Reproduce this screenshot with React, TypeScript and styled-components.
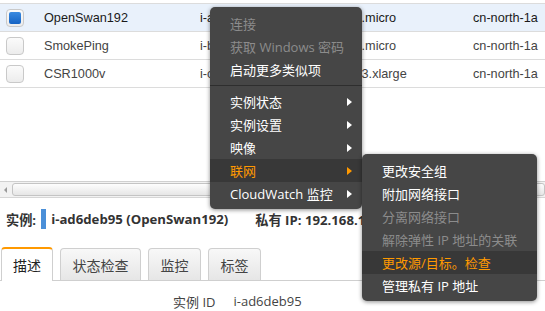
import React from "react";
import styled, { createGlobalStyle, css } from "styled-components";

const Global = createGlobalStyle`
  html, body { margin: 0; padding: 0; background: #fff; }
  body { font-family: "Liberation Sans", Arial, "Noto Sans CJK SC", sans-serif; }
`;

const UI_FONT = `"Open Sans", "Noto Sans CJK SC", sans-serif`;

const Page = styled.div`
  position: relative;
  width: 545px;
  height: 311px;
  overflow: hidden;
  background: #fff;
`;

const TableViewport = styled.div`
  margin-top: 3px;
  height: 177px;
  border-top: 1px solid #dcdcdc;
`;

const Row = styled.div<{ $selected?: boolean }>`
  display: grid;
  grid-template-columns: 44px 156px 151px 122px 1fr;
  align-items: center;
  height: 27px;
  border-bottom: 1px solid #dcdcdc;
  background: ${(p) => (p.$selected ? "#e9f1fb" : "#fff")};
  color: ${(p) => (p.$selected ? "#1a1a1a" : "#444")};
  font-size: 12.7px;
  white-space: nowrap;
`;

const CheckCell = styled.div`
  padding-left: 6px;
  display: flex;
  align-items: center;
`;

const Checkbox = styled.div<{ $checked?: boolean }>`
  width: 16px;
  height: 16px;
  border: 1px solid #c9c9c9;
  border-radius: 4px;
  background: linear-gradient(#fbfbfb, #ececec);
  display: flex;
  align-items: center;
  justify-content: center;
  ${(p) =>
    p.$checked &&
    css`
      &::after {
        content: "";
        width: 12px;
        height: 12px;
        border-radius: 2px;
        background: linear-gradient(#3b8be0, #1563c4);
      }
    `}
`;

const Cell = styled.div`
  overflow: hidden;
`;

const HScroll = styled.div`
  display: flex;
  height: 15px;
  border-top: 1px solid #d0d0d0;
  border-bottom: 1px solid #d6d6d6;
  background: #f2f2f2;
`;

const ScrollArrow = styled.div`
  width: 11px;
  display: flex;
  align-items: center;
  justify-content: center;
  &::before {
    content: "";
    border-top: 3px solid transparent;
    border-bottom: 3px solid transparent;
    border-right: 3px solid #9a9a9a;
  }
`;

const ScrollThumb = styled.div`
  flex: 1;
  margin: 1px 0 1px 1px;
  border: 1px solid #c4c4c4;
  border-radius: 3px;
  background: linear-gradient(#fdfdfd, #e6e6e6);
`;

const DetailHeader = styled.div`
  display: flex;
  align-items: center;
  height: 20px;
  margin-top: 11px;
  padding-left: 6px;
  font-family: ${UI_FONT};
  font-weight: 700;
  font-size: 13.2px;
  color: #333;
  white-space: nowrap;
`;

const ColorBar = styled.span`
  display: inline-block;
  width: 5px;
  height: 20px;
  background: #4a8fd8;
  margin: 0 5px 0 5px;
`;

const PrivateIp = styled.span`
  margin-left: 27px;
`;

const TabBar = styled.div`
  display: flex;
  gap: 7px;
  align-items: flex-end;
  margin-top: 18px;
  padding-left: 1px;
  height: 33px;
  border-bottom: 1px solid #cfcfcf;
`;

const Tab = styled.div<{ $active?: boolean; $w: number }>`
  box-sizing: border-box;
  width: ${(p) => p.$w}px;
  height: ${(p) => (p.$active ? 34 : 32)}px;
  margin-bottom: ${(p) => (p.$active ? -1 : 0)}px;
  display: flex;
  align-items: center;
  justify-content: center;
  border: 1px solid #cfcfcf;
  border-bottom: none;
  border-radius: 4px 4px 0 0;
  font-family: ${UI_FONT};
  font-size: 14px;
  color: #444;
  ${(p) =>
    p.$active
      ? css`
          background: #fff;
          border-top: 2px solid #f90;
          color: #222;
        `
      : css`
          background: linear-gradient(#f8f8f8, #e6e6e6);
        `}
`;

const DetailRow = styled.div`
  display: flex;
  padding: 11px 0 0 173px;
  font-family: ${UI_FONT};
  font-size: 13px;
  color: #444;
  gap: 18px;
`;

const Menu = styled.div<{ $left: number; $top: number; $w: number }>`
  position: absolute;
  left: ${(p) => p.$left}px;
  top: ${(p) => p.$top}px;
  width: ${(p) => p.$w}px;
  box-sizing: border-box;
  padding: 5px 0 4px;
  background: #464646;
  border-radius: 5px;
  box-shadow: 0 1px 4px rgba(0, 0, 0, 0.45);
  font-family: ${UI_FONT};
  font-size: 13px;
  z-index: 2;
`;

const MenuItem = styled.div<{ $state?: "normal" | "disabled" | "active" }>`
  display: flex;
  align-items: center;
  justify-content: space-between;
  height: 23px;
  padding: 0 10px 0 20px;
  white-space: nowrap;
  color: ${(p) =>
    p.$state === "disabled" ? "#8c8c8c" : p.$state === "active" ? "#ff9900" : "#fff"};
  background: ${(p) => (p.$state === "active" ? "#383838" : "transparent")};
`;

const Arrow = styled.span<{ $active?: boolean }>`
  width: 0;
  height: 0;
  border-top: 4px solid transparent;
  border-bottom: 4px solid transparent;
  border-left: 5px solid ${(p) => (p.$active ? "#ff9900" : "#fff")};
`;

const Separator = styled.div`
  height: 1px;
  margin: 4px 0;
  background: #2e2e2e;
`;

const rows = [
  { name: "OpenSwan192", id: "i-ad6deb95", type: "t2.micro", zone: "cn-north-1a", sel: true },
  { name: "SmokePing", id: "i-b2c7f1a0", type: "t2.micro", zone: "cn-north-1a", sel: false },
  { name: "CSR1000v", id: "i-c41e9d27", type: "m3.xlarge", zone: "cn-north-1a", sel: false },
];

export default function App() {
  return (
    <Page>
      <Global />
      <TableViewport>
        {rows.map((r) => (
          <Row key={r.name} $selected={r.sel}>
            <CheckCell>
              <Checkbox $checked={r.sel} />
            </CheckCell>
            <Cell>{r.name}</Cell>
            <Cell>{r.id}</Cell>
            <Cell>{r.type}</Cell>
            <Cell>{r.zone}</Cell>
          </Row>
        ))}
      </TableViewport>
      <HScroll>
        <ScrollArrow />
        <ScrollThumb />
      </HScroll>
      <DetailHeader>
        实例:
        <ColorBar />
        i-ad6deb95 (OpenSwan192)
        <PrivateIp>私有 IP: 192.168.1.192</PrivateIp>
      </DetailHeader>
      <TabBar>
        <Tab $active $w={52}>描述</Tab>
        <Tab $w={81}>状态检查</Tab>
        <Tab $w={53}>监控</Tab>
        <Tab $w={53}>标签</Tab>
      </TabBar>
      <DetailRow>
        <span>实例 ID</span>
        <span>i-ad6deb95</span>
      </DetailRow>

      <Menu $left={210} $top={7} $w={152}>
        <MenuItem $state="disabled">连接</MenuItem>
        <MenuItem $state="disabled">获取 Windows 密码</MenuItem>
        <MenuItem>启动更多类似项</MenuItem>
        <Separator />
        <MenuItem>实例状态<Arrow /></MenuItem>
        <MenuItem>实例设置<Arrow /></MenuItem>
        <MenuItem>映像<Arrow /></MenuItem>
        <MenuItem $state="active">联网<Arrow $active /></MenuItem>
        <MenuItem>CloudWatch 监控<Arrow /></MenuItem>
      </Menu>

      <Menu $left={362} $top={154} $w={175}>
        <MenuItem>更改安全组</MenuItem>
        <MenuItem>附加网络接口</MenuItem>
        <MenuItem $state="disabled">分离网络接口</MenuItem>
        <MenuItem $state="disabled">解除弹性 IP 地址的关联</MenuItem>
        <MenuItem $state="active">更改源/目标。检查</MenuItem>
        <MenuItem>管理私有 IP 地址</MenuItem>
      </Menu>
    </Page>
  );
}
